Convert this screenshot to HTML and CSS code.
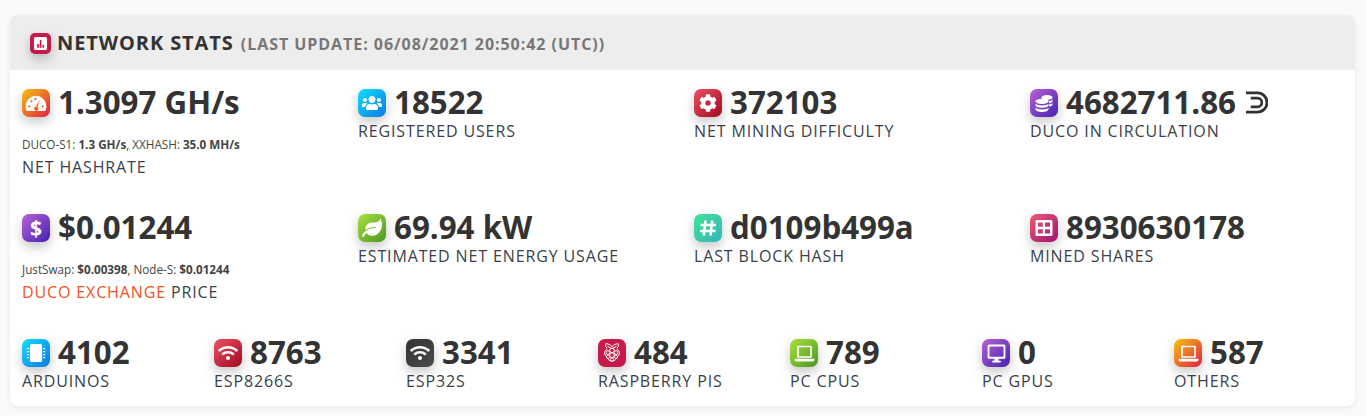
FILE: index.html
```html
<!DOCTYPE html>
<html lang="en">
<head>
<meta charset="utf-8">
<title>Network stats</title>
<link rel="stylesheet" href="styles.css">
</head>
<body>
<svg class="defs" width="0" height="0" aria-hidden="true">
  <symbol id="wifi" viewBox="0 0 640 512"><path d="M634.91 154.88C457.74-8.99 182.19-8.93 5.09 154.88c-6.66 6.16-6.79 16.59-.35 22.98l34.24 33.97c6.14 6.1 16.02 6.23 22.4.38 145.92-133.68 371.3-133.71 517.25 0 6.38 5.85 16.26 5.71 22.4-.38l34.24-33.97c6.43-6.39 6.3-16.82-.36-22.98zM320 352c-35.35 0-64 28.65-64 64s28.65 64 64 64 64-28.65 64-64-28.65-64-64-64zm202.67-83.59c-115.26-101.93-290.21-101.82-405.34 0-6.9 6.1-7.12 16.69-.57 23.15l34.44 33.99c6 5.92 15.66 6.32 22.05.8 83.95-72.57 209.74-72.41 293.49 0 6.39 5.52 16.05 5.13 22.05-.8l34.44-33.99c6.56-6.46 6.33-17.06-.56-23.15z"/></symbol>
  <symbol id="laptop" viewBox="0 0 20 20"><path d="M4 2.500h12a1 1 0 0 1 1 1v10.500H3V3.500a1 1 0 0 1 1-1zm.6 1.600v8.400h10.800V4.100z" fill-rule="evenodd"/><path d="M.5 15h19v1a1.500 1.500 0 0 1-1.500 1.500H2A1.500 1.500 0 0 1 .5 16z"/></symbol>
</svg>
<main class="card">
  <header class="card-head">
    <span class="ico ico-head ico-rasp">
      <svg class="g-head" viewBox="0 0 16 16"><path d="M3 1h10a2 2 0 0 1 2 2v10a2 2 0 0 1-2 2H3a2 2 0 0 1-2-2V3a2 2 0 0 1 2-2zm1.500 7.500v4h2v-4zm2.800-4.500v8.500h1.700V4zm2.800 5.500v3h1.700v-3z" fill-rule="evenodd"/></svg>
    </span>
    <h1 class="title">NETWORK STATS <span class="sub">(LAST UPDATE: 06/08/2021 20:50:42 (UTC))</span></h1>
  </header>
  <div class="body">
    <section class="grid4">
      <div class="stat">
        <div class="top">
          <span class="ico ico-orange">
            <svg class="g-gauge" viewBox="0 0 20 20"><path d="M10 3.500a9.500 9.500 0 0 0-9.500 9.500c0 1.300.3 2.500.8 3.600.2.400.5.600.9.600h15.600c.4 0 .7-.2.900-.6.500-1.100.8-2.300.8-3.600A9.500 9.500 0 0 0 10 3.500z"/><g class="gauge-marks"><circle cx="3.800" cy="13" r="1"/><circle cx="5.800" cy="8.500" r="1"/><circle cx="9.500" cy="6.500" r="1"/><circle cx="16.200" cy="13" r="1"/><path d="M13.600 6.800l-2.200 7a1.900 1.900 0 1 1-1.500-.4z"/></g></svg>
          </span>
          <span class="val">1.3097 GH/s</span>
        </div>
        <p class="small">DUCO-S1: <b>1.3 GH/s</b>, XXHASH: <b>35.0 MH/s</b></p>
        <p class="label">NET HASHRATE</p>
      </div>
      <div class="stat">
        <div class="top">
          <span class="ico ico-blue"><svg class="g-users" viewBox="0 0 640 512"><path d="M96 224c35.3 0 64-28.7 64-64s-28.7-64-64-64-64 28.7-64 64 28.7 64 64 64zm448 0c35.3 0 64-28.7 64-64s-28.7-64-64-64-64 28.7-64 64 28.7 64 64 64zm32 32h-64c-17.6 0-33.5 7.1-45.1 18.6 40.3 22.1 68.9 62 75.1 109.4h66c17.7 0 32-14.3 32-32v-32c0-35.3-28.7-64-64-64zm-256 0c61.9 0 112-50.1 112-112S381.9 32 320 32 208 82.1 208 144s50.1 112 112 112zm76.8 32h-8.3c-20.8 10-43.9 16-68.5 16s-47.6-6-68.5-16h-8.3C179.6 288 128 339.6 128 403.2V432c0 26.5 21.5 48 48 48h288c26.5 0 48-21.5 48-48v-28.8c0-63.6-51.6-115.2-115.2-115.2zm-223.7-13.4C161.5 263.1 145.6 256 128 256H64c-35.3 0-64 28.7-64 64v32c0 17.7 14.3 32 32 32h65.9c6.3-47.4 34.9-87.3 75.2-109.4z"/></svg></span>
          <span class="val">18522</span>
        </div>
        <p class="label">REGISTERED USERS</p>
      </div>
      <div class="stat">
        <div class="top">
          <span class="ico ico-red"><svg class="g-cog" viewBox="0 0 512 512"><path d="M487.4 315.7l-42.6-24.6c4.300-23.200 4.300-47 0-70.200l42.600-24.600c4.900-2.800 7.100-8.600 5.500-14-11.100-35.600-30-67.800-54.700-94.600-3.800-4.100-10-5.100-14.800-2.300L380.800 110c-17.900-15.400-38.500-27.300-60.800-35.100V25.800c0-5.600-3.900-10.500-9.400-11.700-36.700-8.200-74.300-7.800-109.200 0-5.500 1.200-9.400 6.100-9.400 11.700V75c-22.200 7.900-42.800 19.800-60.800 35.100L88.700 85.500c-4.900-2.800-11-1.900-14.800 2.300-24.700 26.700-43.600 58.900-54.700 94.600-1.700 5.400.6 11.200 5.500 14L67.300 221c-4.300 23.200-4.300 47 0 70.200l-42.600 24.600c-4.900 2.800-7.100 8.600-5.500 14 11.100 35.600 30 67.800 54.700 94.600 3.800 4.100 10 5.100 14.800 2.300l42.600-24.600c17.900 15.400 38.500 27.300 60.800 35.100v49.200c0 5.600 3.900 10.500 9.400 11.700 36.700 8.200 74.300 7.800 109.200 0 5.500-1.200 9.400-6.100 9.400-11.700v-49.200c22.200-7.900 42.800-19.800 60.800-35.100l42.600 24.600c4.900 2.800 11 1.900 14.800-2.300 24.700-26.700 43.600-58.900 54.700-94.600 1.500-5.500-.7-11.300-5.600-14.100zM256 336c-44.100 0-80-35.900-80-80s35.900-80 80-80 80 35.900 80 80-35.900 80-80 80z"/></svg></span>
          <span class="val">372103</span>
        </div>
        <p class="label">NET MINING DIFFICULTY</p>
      </div>
      <div class="stat">
        <div class="top">
          <span class="ico ico-purple"><svg class="g-coins" viewBox="0 0 20 20"><ellipse cx="13" cy="4.500" rx="5.500" ry="2.500"/><path d="M15 8.100c1.600-.2 2.800-.8 3.500-1.500v1.600c0 .9-1.400 1.700-3.500 2zM15 11.500c1.600-.2 2.800-.8 3.500-1.500v1.600c0 .9-1.400 1.700-3.500 2z"/><ellipse cx="8" cy="8.300" rx="6.500" ry="2.600"/><path d="M1.500 10.700c1.300 1 3.700 1.700 6.500 1.700s5.200-.7 6.500-1.700v1.500c0 1.400-2.900 2.500-6.500 2.500s-6.500-1.100-6.500-2.500zM1.500 14.800c1.300 1 3.700 1.700 6.500 1.700s5.200-.7 6.500-1.700v1.500c0 1.400-2.900 2.700-6.500 2.700s-6.500-1.300-6.500-2.700z"/></svg></span>
          <span class="val">4682711.86</span>
          <svg class="duco" viewBox="0 0 24 24"><path d="M1 .5h12a11.500 11.500 0 0 1 0 23H1v-3h12a8.500 8.500 0 0 0 0-17H1z"/><path d="M6 6h7a6 6 0 0 1 0 12H6v-2.800h7a3.200 3.200 0 0 0 0-6.400H6z"/></svg>
        </div>
        <p class="label">DUCO IN CIRCULATION</p>
      </div>

      <div class="stat">
        <div class="top">
          <span class="ico ico-purple"><span class="glyph">$</span></span>
          <span class="val">$0.01244</span>
        </div>
        <p class="small">JustSwap: <b>$0.00398</b>, Node-S: <b>$0.01244</b></p>
        <p class="label"><span class="accent">DUCO EXCHANGE</span> PRICE</p>
      </div>
      <div class="stat">
        <div class="top">
          <span class="ico ico-green"><svg class="g-leaf" viewBox="0 0 576 512"><path d="M546.2 9.7c-5.6-12.5-21.6-13-28.3-1.2C486.9 62.4 431.4 96 368 96h-80C182 96 96 182 96 288c0 7 .8 13.700 1.500 20.500C161.300 262.800 253.400 224 384 224c8.800 0 16 7.200 16 16s-7.200 16-16 16C132.600 256 26 410.100 2.400 468c-6.600 16.300 1.200 34.900 17.500 41.600 16.400 6.800 35-1.100 41.800-17.300 1.500-3.600 20.900-47.900 71.900-90.600 32.400 43.900 94 85.800 174.900 77.200C465.500 467.500 576 326.700 576 154.300c0-50.200-10.800-102.200-29.800-144.600z"/></svg></span>
          <span class="val">69.94 kW</span>
        </div>
        <p class="label">ESTIMATED NET ENERGY USAGE</p>
      </div>
      <div class="stat">
        <div class="top">
          <span class="ico ico-teal"><svg class="g-hash" viewBox="0 0 20 20"><path d="M7.500 2.500L5.800 17.500M14.200 2.500L12.500 17.500M2.500 7h15.500M2 13h15.500"/></svg></span>
          <span class="val">d0109b499a</span>
        </div>
        <p class="label">LAST BLOCK HASH</p>
      </div>
      <div class="stat">
        <div class="top">
          <span class="ico ico-pink"><svg class="g-shares" viewBox="0 0 20 20"><path d="M3 2h14a1.500 1.500 0 0 1 1.500 1.500v13A1.500 1.500 0 0 1 17 18H3a1.500 1.500 0 0 1-1.500-1.500v-13A1.500 1.500 0 0 1 3 2zm1 2.500v4.200h4.800V4.500zm7 0v4.200h5V4.500zm-7 6.800v4.200h4.800v-4.200zm7 0v4.200h5v-4.200z" fill-rule="evenodd"/></svg></span>
          <span class="val">8930630178</span>
        </div>
        <p class="label">MINED SHARES</p>
      </div>
    </section>
    <section class="grid7">
      <div class="stat">
        <div class="top">
          <span class="ico ico-blue"><svg class="g-chip" viewBox="0 0 20 20"><path d="M5.500 1h9A1.500 1.500 0 0 1 16 2.500v15a1.500 1.500 0 0 1-1.500 1.500h-9A1.500 1.500 0 0 1 4 17.500v-15A1.500 1.500 0 0 1 5.500 1zM.8 5h2.400v1.200H.8zm0 3h2.400v1.200H.8zm0 3h2.400v1.200H.8zm0 3h2.400v1.200H.8zM16.800 5h2.400v1.200h-2.400zm0 3h2.400v1.200h-2.400zm0 3h2.400v1.200h-2.400zm0 3h2.400v1.200h-2.400z"/></svg></span>
          <span class="val">4102</span>
        </div>
        <p class="label">ARDUINOS</p>
      </div>
      <div class="stat">
        <div class="top">
          <span class="ico ico-red"><svg class="g-wifi"><use href="#wifi"/></svg></span>
          <span class="val">8763</span>
        </div>
        <p class="label">ESP8266S</p>
      </div>
      <div class="stat">
        <div class="top">
          <span class="ico ico-dark"><svg class="g-wifi"><use href="#wifi"/></svg></span>
          <span class="val">3341</span>
        </div>
        <p class="label">ESP32S</p>
      </div>
      <div class="stat">
        <div class="top">
          <span class="ico ico-rasp"><svg class="g-rasp" viewBox="0 0 20 20"><g class="rasp-lines"><path d="M4.500 1.500c2 .1 4 1 5.500 2.800 1.500-1.800 3.500-2.700 5.500-2.800.8 1.400.4 3-1.200 4.200.6.400 1 1 1.200 1.700.9.800 1.400 2 1.200 3.300-.2 1-.7 1.800-1.500 2.400-.3 1.100-1 2.100-2 3-1 .9-2.200 1.400-3.200 1.400s-2.200-.5-3.200-1.400c-1-.9-1.700-1.900-2-3-.8-.6-1.300-1.400-1.500-2.400-.2-1.300.3-2.500 1.200-3.300.2-.7.600-1.300 1.200-1.700C4.100 4.500 3.700 2.900 4.500 1.500z"/><circle cx="10" cy="7.600" r="2.100"/><circle cx="6.300" cy="9.600" r="1.700"/><circle cx="13.700" cy="9.600" r="1.700"/><circle cx="10" cy="12" r="2.100"/><circle cx="6.500" cy="13.400" r="1.500"/><circle cx="13.500" cy="13.400" r="1.500"/><circle cx="10" cy="16" r="1.500"/><path d="M6 4l4 2.200L14 4"/></g></svg></span>
          <span class="val">484</span>
        </div>
        <p class="label">RASPBERRY PIS</p>
      </div>
      <div class="stat">
        <div class="top">
          <span class="ico ico-green"><svg class="g-laptop"><use href="#laptop"/></svg></span>
          <span class="val">789</span>
        </div>
        <p class="label">PC CPUS</p>
      </div>
      <div class="stat">
        <div class="top">
          <span class="ico ico-purple"><svg class="g-desktop" viewBox="0 0 20 20"><path d="M3 1.500h14a1.500 1.500 0 0 1 1.500 1.500v10.500A1.500 1.500 0 0 1 17 15h-5v2h2v1.500H6V17h2v-2H3a1.500 1.500 0 0 1-1.500-1.500V3A1.500 1.500 0 0 1 3 1.500zm.300 1.800v9.900h13.400V3.300z" fill-rule="evenodd"/></svg></span>
          <span class="val">0</span>
        </div>
        <p class="label">PC GPUS</p>
      </div>
      <div class="stat">
        <div class="top">
          <span class="ico ico-orange"><svg class="g-laptop"><use href="#laptop"/></svg></span>
          <span class="val">587</span>
        </div>
        <p class="label">OTHERS</p>
      </div>
    </section>
  </div>
</main>
</body>
</html>
```

FILE: styles.css
```css
* { box-sizing: border-box; }
html, body { margin: 0; padding: 0; }
body {
  background: #fafafa;
  color: #333;
  font-family: "Open Sans", "Noto Sans", sans-serif;
  padding: 15px 11px 0 10px;
  height: 416px;
  overflow: hidden;
}
.defs { position: absolute; }
.card {
  height: 391px;
  background: #fff;
  border-radius: 8px;
  box-shadow: 0 2px 6px rgba(0, 0, 0, .07);
  overflow: hidden;
}
.card-head {
  height: 55px;
  background: #ededed;
  display: flex;
  align-items: center;
  padding: 1px 0 0 20px;
}
.title {
  margin: 0 0 2px 6px;
  font-size: 20px;
  font-weight: 700;
  letter-spacing: .9px;
  color: #333;
  white-space: nowrap;
}
.sub {
  font-size: 16px;
  color: #777;
  letter-spacing: .95px;
  margin-left: 1px;
}
.body { padding: 19px 0 0 12px; }
.grid4 {
  display: grid;
  grid-template-columns: repeat(4, 336px);
  grid-auto-rows: 125px;
}
.grid7 {
  display: grid;
  grid-template-columns: repeat(7, 192px);
}
.top {
  display: flex;
  align-items: center;
  height: 28px;
}
.ico {
  flex: none;
  width: 28px;
  height: 28px;
  border-radius: 7px;
  display: flex;
  align-items: center;
  justify-content: center;
  color: #fff;
  box-shadow: 0 5px 12px rgba(0, 0, 0, .22);
}
.ico svg { fill: #fff; display: block; }
.ico-head { width: 21px; height: 21px; border-radius: 5px; }
.ico-orange { background: linear-gradient(135deg, #f7c30f, #e01f45); }
.ico-blue { background: linear-gradient(135deg, #14defc, #0a78e6); }
.ico-red { background: linear-gradient(135deg, #ee5062, #9f0a22); }
.ico-purple { background: linear-gradient(135deg, #b861d2, #4522b4); }
.ico-green { background: linear-gradient(135deg, #a9e040, #4a9820); }
.ico-teal { background: linear-gradient(135deg, #40e296, #38b4bc); }
.ico-pink { background: linear-gradient(135deg, #ee5d6c, #a01178); }
.ico-dark { background: linear-gradient(135deg, #333, #4d4a48); }
.ico-rasp { background: #c51a4a; }
.g-head { width: 15px; height: 15px; }
.g-gauge { width: 22px; height: 22px; }
.gauge-marks { fill: #ea6a2c; }
.g-users { width: 20px; height: 16px; }
.g-cog { width: 18px; height: 18px; }
.g-coins { width: 20px; height: 20px; }
.g-leaf { width: 20px; height: 18px; }
.g-hash { width: 20px; height: 20px; stroke: #fff; stroke-width: 2.600; }
.ico .g-hash { fill: none; }
.g-shares { width: 20px; height: 20px; }
.g-chip { width: 20px; height: 20px; }
.g-wifi { width: 20px; height: 16px; }
.g-rasp { width: 22px; height: 22px; }
.ico .rasp-lines { fill: none; stroke: #fff; stroke-width: .9; }
.g-laptop { width: 21px; height: 21px; }
.g-desktop { width: 21px; height: 21px; }
.glyph { font-size: 21px; font-weight: 700; line-height: 1; }
.val {
  margin: 0 0 2px 8px;
  font-size: 31.3px;
  font-weight: 700;
  line-height: 28px;
  color: #333;
  white-space: nowrap;
}
.duco { width: 23px; height: 23px; margin: 0 0 2px 9px; fill: #333; }
.small {
  margin: 19px 0 0;
  font-size: 11.7px;
  line-height: 16px;
  color: #444;
}
.small b { font-weight: 700; }
.label {
  margin: 3px 0 0;
  font-size: 16px;
  line-height: 22px;
  letter-spacing: .87px;
  color: #3a3f4a;
  white-space: nowrap;
}
.small + .label { margin-top: 4px; }
.accent { color: #f4511e; }
```
